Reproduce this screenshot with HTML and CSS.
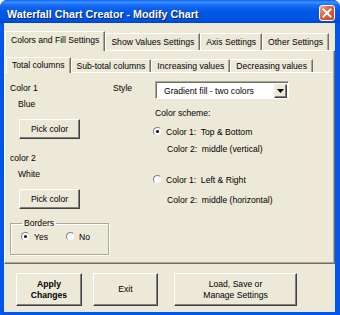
FILE: index.html
```html
<!DOCTYPE html>
<html lang="en">

<head>
  <meta charset="UTF-8">
  <meta name="viewport" content="width=device-width, initial-scale=1.0">
  <title>Waterfall Chart Creator - Modify Chart</title>
  <link rel="stylesheet" href="styles.css">
</head>

<body>

  <div class="window">
    <!-- Title bar -->
    <div class="titlebar">
      <span class="title">Waterfall Chart Creator - Modify Chart</span>
      <span class="close-btn">
        <svg width="10" height="10" viewBox="0 0 10 10">
          <path d="M1.5 1.5 L8.5 8.5 M8.5 1.5 L1.5 8.5" stroke="#fff" stroke-width="2" stroke-linecap="square" />
        </svg>
      </span>
    </div>

    <div class="client">
      <!-- Outer tabs -->
      <div class="tabs outer-tabs">
        <div class="tab active">Colors and Fill Settings</div>
        <div class="tab">Show Values Settings</div>
        <div class="tab">Axis Settings</div>
        <div class="tab">Other Settings</div>
      </div>

      <div class="panel">
        <!-- Inner tabs -->
        <div class="tabs inner-tabs">
          <div class="tab active">Total columns</div>
          <div class="tab">Sub-total columns</div>
          <div class="tab">Increasing values</div>
          <div class="tab">Decreasing values</div>
        </div>

        <div class="inner-panel">
          <div class="col-left">
            <div class="label">Color 1</div>
            <div class="label value">Blue</div>
            <button class="btn pick-btn">Pick color</button>

            <div class="label color2">color 2</div>
            <div class="label value">White</div>
            <button class="btn pick-btn">Pick color</button>

            <fieldset class="group">
              <legend>Borders</legend>
              <div class="radio-row">
                <span class="radio checked"></span><span class="radio-text">Yes</span>
                <span class="radio"></span><span class="radio-text">No</span>
              </div>
            </fieldset>
          </div>

          <div class="col-mid">
            <div class="label">Style</div>
          </div>

          <div class="col-right">
            <div class="select">
              <span class="select-text">Gradient fill - two colors</span>
              <span class="drop-btn">
                <svg width="7" height="4" viewBox="0 0 7 4"><path d="M0 0 H7 L3.5 4 Z" fill="#000" /></svg>
              </span>
            </div>
            <div class="label scheme">Color scheme:</div>
            <div class="radio-row option-1">
              <span class="radio checked"></span><span class="radio-text">Color 1:&nbsp; Top &amp; Bottom</span>
            </div>
            <div class="label indent second-1">Color 2:&nbsp; middle (vertical)</div>
            <div class="radio-row option-2">
              <span class="radio"></span><span class="radio-text">Color 1:&nbsp; Left &amp; Right</span>
            </div>
            <div class="label indent second-2">Color 2:&nbsp; middle (horizontal)</div>
          </div>
        </div>
      </div>

      <!-- Bottom buttons -->
      <div class="buttons">
        <button class="btn big-btn apply">Apply<br>Changes</button>
        <button class="btn big-btn exit">Exit</button>
        <button class="btn big-btn manage">Load, Save or<br>Manage Settings</button>
      </div>
    </div>
  </div>

</body>

</html>
```

FILE: styles.css
```css
/* Global Styles */
body {
  margin: 0;
  padding: 0;
  background-color: #fff;
  font-family: "Liberation Sans", Arial, sans-serif;
  font-size: 8.6px;
  color: #000;
}

.window {
  width: 340px;
  height: 315px;
  background-color: #0055ea;
  border-radius: 7px 7px 0 0;
  display: flex;
  flex-direction: column;
  overflow: hidden;
}

/* Title bar */
.titlebar {
  height: 23px;
  flex: none;
  display: flex;
  justify-content: space-between;
  align-items: flex-start;
  padding: 0 5px 0 7px;
  box-sizing: border-box;
  background: linear-gradient(to bottom, #0a5ff0 0%, #3d92ff 9%, #1a6cf5 22%, #0058e6 50%, #0055e0 85%, #0046c8 100%);
}

.title {
  color: #fff;
  font-weight: bold;
  font-size: 10.7px;
  line-height: 12px;
  margin-top: 8px;
  text-shadow: 1px 1px #0a246a;
}

.close-btn {
  width: 16px;
  height: 16px;
  margin-top: 5px;
  box-sizing: border-box;
  border: 1px solid #fff;
  border-radius: 3px;
  background: linear-gradient(135deg, #f4a98c 0%, #e4633f 40%, #cc4220 100%);
  display: flex;
  justify-content: center;
  align-items: center;
}

/* Client area */
.client {
  flex: 1;
  margin: 0 5px 3px 4px;
  background-color: #ece9d8;
  display: flex;
  flex-direction: column;
  padding-top: 8px;
}

.tabs {
  display: flex;
  align-items: flex-end;
  padding-left: 1px;
}

.tab {
  padding: 0 5px;
  border-top: 1px solid #fff;
  border-left: 1px solid #fff;
  border-right: 1px solid #716f64;
  box-shadow: inset -1px 0 #aca899;
  white-space: nowrap;
  display: flex;
  align-items: center;
  box-sizing: border-box;
  background-color: #ece9d8;
}

.outer-tabs .tab {
  height: 17px;
}

.outer-tabs .tab.active {
  height: 20px;
  padding-bottom: 3px;
  margin-bottom: -1px;
  position: relative;
}

.inner-tabs .tab {
  height: 13px;
}

.inner-tabs .tab.active {
  height: 16px;
  padding-bottom: 2px;
  margin-bottom: -1px;
  position: relative;
}

.panel {
  height: 214px;
  flex: none;
  box-sizing: border-box;
  border-top: 1px solid #fff;
  border-left: 1px solid #fff;
  border-right: 1px solid #716f64;
  border-bottom: 1px solid #716f64;
  box-shadow: inset -1px -1px #aca899;
  padding: 6px 1px 0 0;
  display: flex;
  flex-direction: column;
}

.inner-panel {
  flex: 1;
  border-top: 1px solid #fff;
  display: flex;
  padding: 7px 0 0 5px;
}

.label {
  line-height: 11px;
  white-space: nowrap;
}

/* Left column */
.col-left {
  width: 103px;
  display: flex;
  flex-direction: column;
  align-items: flex-start;
  padding-top: 3px;
}

.value {
  margin: 5px 0 0 8px;
}

.btn {
  font-family: inherit;
  font-size: inherit;
  color: #000;
  background-color: #ece9d8;
  border: 1px solid;
  border-color: #fff #404040 #404040 #fff;
  box-shadow: inset -1px -1px #808080;
  padding: 0;
  cursor: pointer;
}

.pick-btn {
  width: 61px;
  height: 20px;
  margin: 9px 0 0 9px;
}

.color2 {
  margin-top: 14px;
}

.group {
  width: 90px;
  height: 37px;
  box-sizing: border-box;
  margin: 9px 0 0 0;
  padding: 2px 0 0 10px;
  border: 1px solid #aca899;
  box-shadow: 1px 1px 0 #fff, inset 1px 1px 0 #fff;
}

.group legend {
  padding: 0 2px;
  margin-left: 1px;
  line-height: 11px;
}

/* Radio buttons */
.radio-row {
  display: flex;
  align-items: center;
  height: 11px;
}

.radio {
  width: 9px;
  height: 9px;
  box-sizing: border-box;
  border-radius: 50%;
  border: 1px solid;
  border-color: #808080 #e8e6da #e8e6da #808080;
  background-color: #fff;
  display: flex;
  justify-content: center;
  align-items: center;
  flex: none;
}

.radio.checked::after {
  content: "";
  width: 3px;
  height: 3px;
  border-radius: 50%;
  background-color: #000;
}

.radio-text {
  margin-left: 4px;
  white-space: nowrap;
}

.group .radio-text {
  margin-right: 18px;
}

/* Middle column */
.col-mid {
  width: 40px;
  padding-top: 3px;
}

/* Right column */
.col-right {
  display: flex;
  flex-direction: column;
  align-items: flex-start;
  padding-top: 1px;
}

.select {
  width: 134px;
  height: 18px;
  margin-left: 2px;
  box-sizing: border-box;
  border: 1px solid;
  border-color: #aca899 #fff #fff #aca899;
  box-shadow: inset 1px 1px #716f64;
  background-color: #fff;
  display: flex;
  align-items: center;
  justify-content: space-between;
  padding: 1px 1px 0 8px;
}

.select-text {
  white-space: nowrap;
}

.drop-btn {
  width: 13px;
  height: 14px;
  box-sizing: border-box;
  background-color: #ece9d8;
  border: 1px solid;
  border-color: #f1efe2 #404040 #404040 #f1efe2;
  box-shadow: inset -1px -1px #808080;
  display: flex;
  justify-content: center;
  align-items: center;
}

.scheme {
  margin: 9px 0 0 2px;
}

.option-1 {
  margin-top: 7px;
}

.indent {
  margin-left: 14px;
}

.second-1 {
  margin-top: 7px;
}

.option-2 {
  margin-top: 19px;
}

.second-2 {
  margin-top: 10px;
}

/* Bottom buttons */
.buttons {
  display: flex;
  padding: 9px 0 0 12px;
}

.big-btn {
  height: 33px;
  line-height: 11px;
  border-bottom-width: 1px;
}

.apply {
  width: 66px;
  font-weight: bold;
}

.exit {
  width: 65px;
  margin-left: 11px;
}

.manage {
  width: 123px;
  margin-left: 16px;
}
```
